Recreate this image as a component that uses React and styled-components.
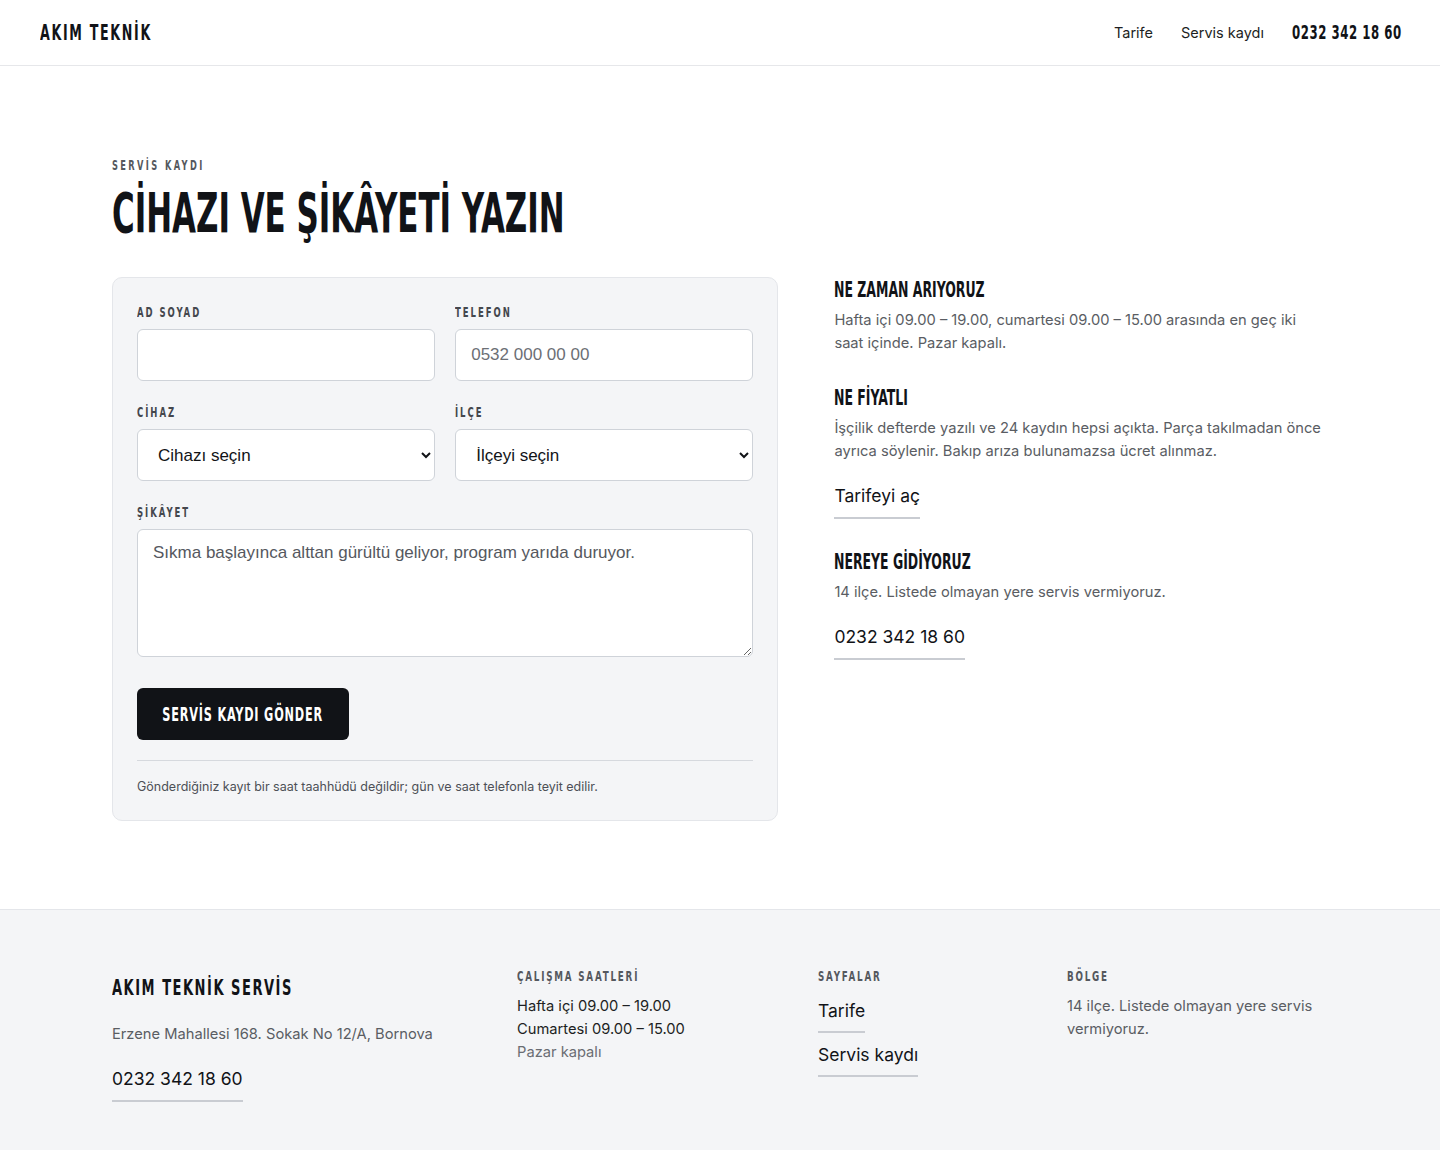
import React from 'react';
import styled, { createGlobalStyle, css } from 'styled-components';

const CONDENSED = `"DejaVu Sans Condensed", "Liberation Sans Narrow", sans-serif`;
const BODY = `Inter, "Noto Sans", "Liberation Sans", sans-serif`;

// the headings use a tall condensed face; DejaVu Condensed squeezed sideways is the nearest we have
const squeeze = (s, origin = 'left') => css`
  font-family: ${CONDENSED};
  font-weight: 700;
  white-space: nowrap;
  transform: scaleX(${s});
  transform-origin: ${origin} center;
`;

const GlobalStyle = createGlobalStyle`
  * { box-sizing: border-box; }
  body {
    margin: 0;
    font-family: ${BODY};
    color: #111317;
    background: #fff;
  }
`;

const App = () => (
  <>
    <GlobalStyle />
    <Header>
      <Logo>AKIM TEKNİK</Logo>
      <Nav>
        <NavLink>Tarife</NavLink>
        <NavLink>Servis kaydı</NavLink>
        <NavPhone>0232 342 18 60</NavPhone>
      </Nav>
    </Header>

    <Main>
      <Eyebrow>SERVİS KAYDI</Eyebrow>
      <Title>CİHAZI VE ŞİKÂYETİ YAZIN</Title>

      <Columns>
        <Card>
          <FieldGrid>
            <Field>
              <Label>AD SOYAD</Label>
              <Input type="text" />
            </Field>
            <Field>
              <Label>TELEFON</Label>
              <Input type="text" placeholder="0532 000 00 00" />
            </Field>
            <Field>
              <Label>CİHAZ</Label>
              <Select defaultValue="">
                <option value="">Cihazı seçin</option>
              </Select>
            </Field>
            <Field>
              <Label>İLÇE</Label>
              <Select defaultValue="">
                <option value="">İlçeyi seçin</option>
              </Select>
            </Field>
            <Field wide>
              <Label>ŞİKÂYET</Label>
              <TextArea placeholder="Sıkma başlayınca alttan gürültü geliyor, program yarıda duruyor." />
            </Field>
          </FieldGrid>
          <SubmitButton type="button">
            <ButtonText>SERVİS KAYDI GÖNDER</ButtonText>
          </SubmitButton>
          <Note>Gönderdiğiniz kayıt bir saat taahhüdü değildir; gün ve saat telefonla teyit edilir.</Note>
        </Card>

        <Aside>
          <InfoBlock>
            <InfoTitle>NE ZAMAN ARIYORUZ</InfoTitle>
            <InfoText>Hafta içi 09.00 – 19.00, cumartesi 09.00 – 15.00 arasında en geç iki saat içinde. Pazar kapalı.</InfoText>
          </InfoBlock>
          <InfoBlock>
            <InfoTitle>NE FİYATLI</InfoTitle>
            <InfoText>İşçilik defterde yazılı ve 24 kaydın hepsi açıkta. Parça takılmadan önce ayrıca söylenir. Bakıp arıza bulunamazsa ücret alınmaz.</InfoText>
            <UnderLink>Tarifeyi aç</UnderLink>
          </InfoBlock>
          <InfoBlock>
            <InfoTitle>NEREYE GİDİYORUZ</InfoTitle>
            <InfoText>14 ilçe. Listede olmayan yere servis vermiyoruz.</InfoText>
            <UnderLink>0232 342 18 60</UnderLink>
          </InfoBlock>
        </Aside>
      </Columns>
    </Main>

    <Footer>
      <FooterGrid>
        <FooterCol>
          <FooterBrand>AKIM TEKNİK SERVİS</FooterBrand>
          <FooterText>Erzene Mahallesi 168. Sokak No 12/A, Bornova</FooterText>
          <UnderLink>0232 342 18 60</UnderLink>
        </FooterCol>
        <FooterCol>
          <FooterHead>ÇALIŞMA SAATLERİ</FooterHead>
          <HoursLine>Hafta içi 09.00 – 19.00</HoursLine>
          <HoursLine>Cumartesi 09.00 – 15.00</HoursLine>
          <HoursLine muted>Pazar kapalı</HoursLine>
        </FooterCol>
        <FooterCol>
          <FooterHead>SAYFALAR</FooterHead>
          <LinkStack>
            <UnderLink>Tarife</UnderLink>
            <UnderLink>Servis kaydı</UnderLink>
          </LinkStack>
        </FooterCol>
        <FooterCol>
          <FooterHead>BÖLGE</FooterHead>
          <FooterText narrow>14 ilçe. Listede olmayan yere servis vermiyoruz.</FooterText>
        </FooterCol>
      </FooterGrid>
    </Footer>
  </>
);

const Header = styled.header`
  height: 66px;
  padding: 0 40px;
  display: flex;
  align-items: center;
  justify-content: space-between;
  border-bottom: 1px solid #e6e7ea;
`;

const Logo = styled.div`
  ${squeeze(0.67)}
  font-size: 21px;
  letter-spacing: 2.5px;
  color: #111317;
`;

const Nav = styled.nav`
  display: flex;
  align-items: center;
  gap: 28px;
`;

const NavLink = styled.a`
  font-size: 14.5px;
  color: #1d1f23;
`;

const NavPhone = styled.a`
  ${squeeze(0.67)}
  width: 108px;
  font-size: 19.5px;
  letter-spacing: 0.8px;
  color: #111317;
`;

const Main = styled.main`
  max-width: 1216px;
  margin: 0 auto;
  padding: 91px 0 88px;
`;

const Eyebrow = styled.div`
  ${squeeze(0.68)}
  font-size: 13.5px;
  letter-spacing: 3.5px;
  color: #55585e;
`;

const Title = styled.h1`
  ${squeeze(0.625)}
  margin: 8px 0 32px;
  font-size: 55px;
  line-height: 64px;
  color: #111317;
`;

const Columns = styled.div`
  display: grid;
  grid-template-columns: 1.35fr 1fr;
  gap: 56px;
  align-items: start;
`;

const Card = styled.form`
  background: #f4f5f7;
  border: 1px solid #e4e6ea;
  border-radius: 10px;
  padding: 25px 24px 24px;
`;

const FieldGrid = styled.div`
  display: grid;
  grid-template-columns: 1fr 1fr;
  column-gap: 20px;
  row-gap: 22px;
`;

const Field = styled.div`
  display: flex;
  flex-direction: column;
  gap: 8px;
  grid-column: ${p => (p.wide ? '1 / -1' : 'auto')};
`;

const Label = styled.label`
  ${squeeze(0.7)}
  font-size: 13.5px;
  line-height: 18px;
  letter-spacing: 2.8px;
  color: #44474d;
`;

const controlBase = `
  width: 100%;
  border: 1px solid #cfd3d9;
  border-radius: 6px;
  background: #fff;
  font-family: "Liberation Sans", Arial, sans-serif;
  font-size: 17px;
  color: #111317;
  outline: none;
`;

const Input = styled.input`
  ${controlBase}
  height: 52px;
  padding: 0 15px;
  &::placeholder { color: #6c6f75; }
`;

const Select = styled.select`
  ${controlBase}
  height: 52px;
  padding: 0 12px 0 16px;
`;

const TextArea = styled.textarea`
  ${controlBase}
  height: 128px;
  padding: 13px 15px;
  resize: vertical;
  &::placeholder { color: #55585e; }
`;

const SubmitButton = styled.button`
  margin-top: 31px;
  width: 212px;
  height: 52px;
  display: flex;
  align-items: center;
  justify-content: center;
  border: 0;
  border-radius: 6px;
  background: #111317;
  cursor: pointer;
`;

const ButtonText = styled.span`
  ${squeeze(0.66, 'center')}
  font-size: 19px;
  letter-spacing: 1.2px;
  color: #fff;
`;

const Note = styled.p`
  margin: 20px 0 0;
  padding-top: 17px;
  border-top: 1px solid #d6d9de;
  font-size: 12.5px;
  line-height: 18px;
  color: #4d5056;
`;

const Aside = styled.aside`
  display: flex;
  flex-direction: column;
  gap: 30px;
`;

const InfoBlock = styled.div`
  display: flex;
  flex-direction: column;
  align-items: flex-start;
`;

const InfoTitle = styled.h3`
  ${squeeze(0.66)}
  margin: 0 0 6px;
  font-size: 21px;
  line-height: 26px;
  color: #111317;
`;

const InfoText = styled.p`
  margin: 0;
  font-size: 14.7px;
  line-height: 23px;
  color: #5a5d63;
`;

const UnderLink = styled.a`
  display: inline-block;
  margin-top: 21px;
  padding-bottom: 9px;
  border-bottom: 2px solid #c9ccd2;
  font-size: 17.5px;
  line-height: 24px;
  color: #111317;
`;

const Footer = styled.footer`
  background: #f4f5f7;
  border-top: 1px solid #e4e6ea;
  padding: 57px 0 70px;
`;

const FooterGrid = styled.div`
  max-width: 1216px;
  margin: 0 auto;
  display: grid;
  grid-template-columns: 357fr 253fr 201fr 261fr;
  column-gap: 48px;
`;

const FooterCol = styled.div`
  display: flex;
  flex-direction: column;
  align-items: flex-start;
`;

const FooterBrand = styled.div`
  ${squeeze(0.69)}
  margin-top: 8px;
  margin-bottom: 22px;
  font-size: 21px;
  line-height: 26px;
  letter-spacing: 2.2px;
  color: #111317;
`;

const FooterText = styled.p`
  margin: 0;
  max-width: ${p => (p.narrow ? '256px' : 'none')};
  font-size: 14.7px;
  line-height: 23px;
  color: #5a5d63;
`;

const FooterHead = styled.div`
  ${squeeze(0.72)}
  margin-bottom: 10px;
  font-size: 13.5px;
  line-height: 18px;
  letter-spacing: 2.5px;
  color: #55585e;
`;

const HoursLine = styled.div`
  font-size: 14.7px;
  line-height: 23px;
  color: ${p => (p.muted ? '#6a6d73' : '#1d1f23')};
`;

const LinkStack = styled.div`
  display: flex;
  flex-direction: column;
  align-items: flex-start;
  margin-top: -6px;
  & > a { margin-top: 10px; padding-bottom: 8px; }
`;

export default App;
